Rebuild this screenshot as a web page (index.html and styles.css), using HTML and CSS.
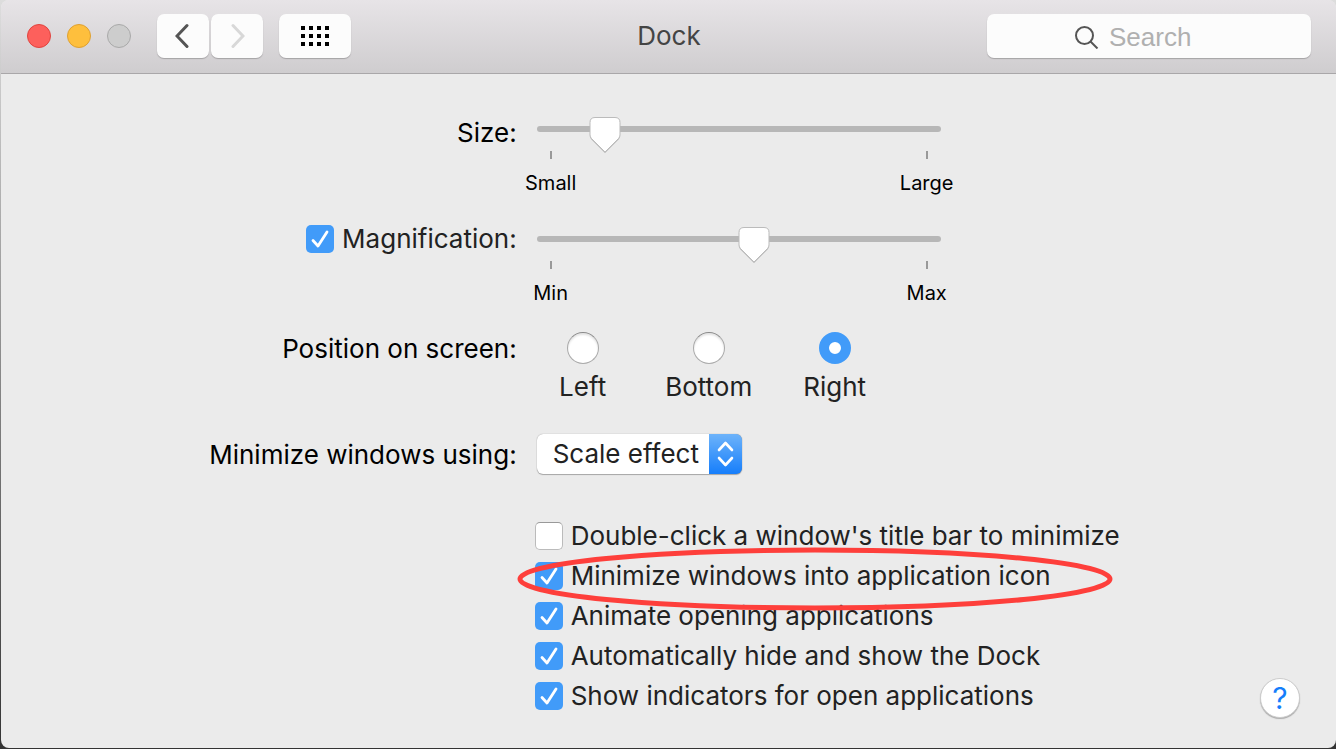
FILE: index.html
```html
<!doctype html>
<html lang="en">
<head>
    <meta charset="utf-8">
    <meta name="viewport" content="width=device-width, initial-scale=1">

    <title>Dock</title>

    <link rel="stylesheet" href="styles.css">
</head>
<body>

<div class="window">
    <header class="toolbar">
        <div class="toolbar-left">
            <div class="lights">
                <button class="light close" aria-label="Close"></button>
                <button class="light minimize" aria-label="Minimize"></button>
                <button class="light zoom" aria-label="Zoom" disabled></button>
            </div>
            <div class="nav">
                <button class="tool back" aria-label="Back">
                    <svg width="16" height="26" viewBox="0 0 16 26"><path d="M12 2.500 2 13 12 23.500"/></svg>
                </button>
                <button class="tool forward" aria-label="Forward" disabled>
                    <svg width="16" height="26" viewBox="0 0 16 26"><path d="M4 2.500 14 13 4 23.500"/></svg>
                </button>
            </div>
            <button class="tool show-all" aria-label="Show All">
                <svg width="28" height="20" viewBox="0 0 28 20">
                    <path d="M0 0h4v4H0zM8 0h4v4H8zM16 0h4v4h-4zM24 0h4v4h-4zM0 8h4v4H0zM8 8h4v4H8zM16 8h4v4h-4zM24 8h4v4h-4zM0 16h4v4H0zM8 16h4v4H8zM16 16h4v4h-4zM24 16h4v4h-4z"/>
                </svg>
            </button>
        </div>
        <h1>Dock</h1>
        <div class="search">
            <svg width="24" height="24" viewBox="0 0 24 24"><circle cx="9.500" cy="10.500" r="8.500"/><path d="M15.500 16.500 22.500 23.500"/></svg>
            <input type="search" placeholder="Search" aria-label="Search">
        </div>
    </header>

    <form class="settings">
        <div class="label"><label for="size">Size:</label></div>
        <div class="slider">
            <input type="range" id="size" min="0" max="100" value="14">
            <div class="ticks"><span>Small</span><span>Large</span></div>
        </div>

        <div class="label raised">
            <label class="option">
                <input type="checkbox" checked>
                Magnification:
            </label>
        </div>
        <div class="slider">
            <input type="range" aria-label="Magnification" min="0" max="100" value="54">
            <div class="ticks"><span>Min</span><span>Max</span></div>
        </div>

        <div class="label raised" id="position-label">Position on screen:</div>
        <div class="positions" role="radiogroup" aria-labelledby="position-label">
            <label><input type="radio" name="position">Left</label>
            <label><input type="radio" name="position">Bottom</label>
            <label><input type="radio" name="position" checked>Right</label>
        </div>

        <div class="label effect-label"><label for="effect">Minimize windows using:</label></div>
        <div class="effect">
            <select id="effect">
                <option>Genie effect</option>
                <option selected>Scale effect</option>
            </select>
        </div>

        <div class="bottom">
            <div class="options">
                <label class="option"><input type="checkbox">Double-click a window's title bar to minimize</label>
                <div class="circled">
                    <label class="option"><input type="checkbox" checked>Minimize windows into application icon</label>
                    <svg class="circle" width="600" height="66" viewBox="0 0 600 66"><ellipse cx="300" cy="33" rx="295" ry="29"/></svg>
                </div>
                <label class="option"><input type="checkbox" checked>Animate opening applications</label>
                <label class="option"><input type="checkbox" checked>Automatically hide and show the Dock</label>
                <label class="option"><input type="checkbox" checked>Show indicators for open applications</label>
            </div>
            <button type="button" class="help" aria-label="Help">?</button>
        </div>
    </form>
</div>

</body>
</html>
```

FILE: styles.css
```css
* {
    box-sizing: border-box;
}

html {
    min-height: 100%;
    background: linear-gradient(#ddd, #888 50%, #333);
}

body {
    margin: 0;
    font-family: Inter, "Liberation Sans", Arial, sans-serif;
    font-size: 26px;
    line-height: 32px;
    color: #222;
}

button, input, select {
    margin: 0;
    padding: 0;
    border: 0;
    font: inherit;
    color: inherit;
    appearance: none;
}

svg {
    display: block;
    fill: none;
}

.window {
    display: flex;
    flex-direction: column;
    min-height: calc(100vh - 1px);
    margin: 0 0 0 1px;
    border-radius: 8px;
    background-color: #ebebeb;
    overflow: hidden;
}

/* toolbar */

.toolbar {
    display: grid;
    grid-template-columns: 1fr auto 1fr;
    align-items: center;
    height: 74px;
    padding: 0 25px 1px 26px;
    border-bottom: 1px solid #a9a7a9;
    background: linear-gradient(#e7e4e7, #cfcdcf);
}

.toolbar-left, .lights, .nav {
    display: flex;
    align-items: center;
}

.lights {
    gap: 16px;
    margin-right: 26px;
}

.light {
    width: 24px;
    height: 24px;
    border: 1px solid #e0443f;
    border-radius: 50%;
    background-color: #fd605c;
}

.minimize {
    border-color: #dea032;
    background-color: #febf3d;
}

.zoom {
    border-color: #a9a9a9;
    background-color: #cdcdcd;
}

.nav {
    gap: 2px;
    margin-right: 16px;
}

.tool, .search {
    border-radius: 7px;
    background-color: #fcfcfc;
    box-shadow: 0 1px 1px #a5a3a5;
}

.tool {
    display: flex;
    align-items: center;
    justify-content: center;
    width: 52px;
    height: 44px;
}

.back svg, .forward svg {
    stroke: #555;
    stroke-width: 3;
    stroke-linecap: round;
}

.forward svg {
    stroke: #d8d8d8;
}

.show-all {
    width: 72px;
}

.show-all svg {
    fill: #000;
}

h1 {
    margin: 0;
    font-size: 26px;
    font-weight: normal;
    color: #444;
}

.search {
    display: flex;
    align-items: center;
    justify-self: end;
    gap: 10px;
    width: 324px;
    height: 44px;
    padding: 2px 0 0 88px;
    font-family: "Liberation Sans", Arial, sans-serif;
}

.search svg {
    flex: none;
    stroke: #555;
    stroke-width: 2;
}

.search input {
    flex: 1;
    min-width: 0;
    background: none;
    outline: 0;
}

.search input::placeholder {
    color: #b0b0b0;
}

/* settings */

.settings {
    display: grid;
    grid-template-columns: 20fr 31fr;
    column-gap: 20px;
    padding: 43px 0 30px;
}

.label {
    justify-self: end;
    color: #000;
}

.raised {
    margin-top: -4px;
}

.option {
    display: flex;
    align-items: center;
    gap: 8px;
    color: #222;
}

.slider {
    width: 404px;
    height: 110px;
    padding-top: 9px;
}

input[type=range] {
    display: block;
    width: 100%;
    height: 6px;
    border-radius: 3px;
    background-color: #b7b7b7;
}

input[type=range]::-webkit-slider-runnable-track {
    height: 6px;
}

input[type=range]::-webkit-slider-thumb {
    width: 32px;
    height: 38px;
    margin-top: -10px;
    appearance: none;
    background: url("data:image/svg+xml,%3Csvg xmlns='http://www.w3.org/2000/svg' width='32' height='38'%3E%3Cpath d='M6 2.500h20q5 0 5 5V20q0 2-1.500 3.500L16 37 2.500 23.500Q1 22 1 20V7.500q0-5 5-5z' fill='%23aaa'/%3E%3Cpath d='M6 1.500h20q5 0 5 5V19q0 2-1.500 3.500L16 36 2.500 22.500Q1 21 1 19V6.500q0-5 5-5z' fill='%23fff' stroke='%23bbb'/%3E%3C/svg%3E");
}

.ticks {
    display: flex;
    justify-content: space-between;
    margin: 19px -16px 0;
    font-size: 20px;
    line-height: 24px;
    color: #000;
}

.ticks span {
    width: 60px;
    text-align: center;
}

.ticks span::before {
    content: "";
    display: block;
    width: 2px;
    height: 8px;
    margin: 0 auto 12px;
    background-color: #999;
}

input[type=checkbox] {
    width: 28px;
    height: 28px;
    border: 1px solid #bbb;
    border-top-color: #999;
    border-radius: 5px;
    background-color: #fff;
}

input[type=checkbox]:checked {
    border: 0;
    background: #419bf9 url("data:image/svg+xml,%3Csvg xmlns='http://www.w3.org/2000/svg' width='28' height='28'%3E%3Cpath d='M7 15.500 12 21 21 7' fill='none' stroke='%23fff' stroke-width='2.800' stroke-linecap='round' stroke-linejoin='round'/%3E%3C/svg%3E");
}

.positions {
    display: flex;
    height: 97px;
    margin: -5px 0 0 -17px;
}

.positions label {
    display: flex;
    flex-direction: column;
    align-items: center;
    gap: 7px;
    width: 126px;
}

input[type=radio] {
    width: 32px;
    height: 32px;
    border: 1px solid #aaa;
    border-top-color: #888;
    border-radius: 50%;
    background-color: #fff;
    box-shadow: inset 0 2px 2px #e4e4e4;
}

input[type=radio]:checked {
    border: 10px solid #419bf9;
    box-shadow: none;
}

.effect {
    height: 86px;
    margin-top: 5px;
}

.effect-label {
    padding-top: 10px;
}

select {
    width: 205px;
    height: 40px;
    padding-left: 16px;
    border-radius: 6px;
    background:
        url("data:image/svg+xml,%3Csvg xmlns='http://www.w3.org/2000/svg' width='33' height='40'%3E%3Cpath d='M10 16l6.500-7 6.500 7M10 24l6.500 7 6.500-7' fill='none' stroke='%23fff' stroke-width='2.600' stroke-linecap='round' stroke-linejoin='round'/%3E%3C/svg%3E") right / 33px 40px no-repeat,
        linear-gradient(#6db3fa, #167efb) right / 33px 40px no-repeat,
        #fff;
    box-shadow: 0 0 1px #888, 0 1px 1px #aaa;
}

.bottom {
    grid-column: 2;
    display: flex;
    justify-content: space-between;
    align-items: end;
    margin-left: -2px;
    padding-right: 36px;
}

.options {
    display: flex;
    flex-direction: column;
    gap: 8px;
    padding-bottom: 6px;
    white-space: nowrap;
}

.circled {
    position: relative;
}

.circle {
    position: absolute;
    top: -14px;
    left: -20px;
    stroke: #fe3f3b;
    stroke-width: 5;
    pointer-events: none;
}

.help {
    flex: none;
    width: 40px;
    height: 40px;
    border: 1px solid #ccc;
    border-radius: 50%;
    background-color: #fff;
    box-shadow: 0 1px 1px #aaa;
    font-size: 30px;
    color: #157efb;
}
```
